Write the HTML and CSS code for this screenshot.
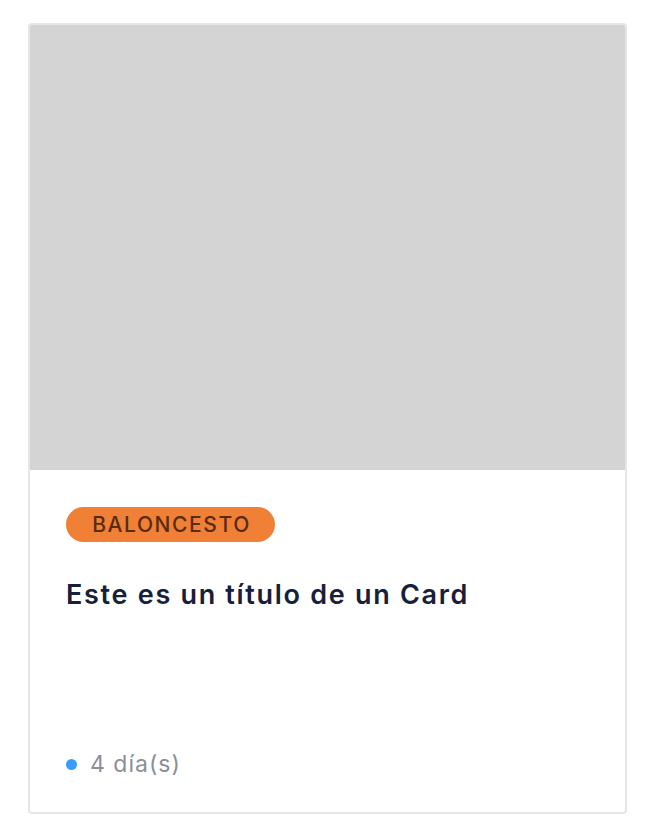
FILE: index.html
```html
<!DOCTYPE html>
<html>
<head>
<meta charset="utf-8">
<link rel="stylesheet" href="styles.css">
</head>
<body>
<div class="page">
  <article class="card">
    <div class="card-image"></div>
    <div class="card-body">
      <span class="badge">BALONCESTO</span>
      <h2 class="title">Este es un título de un Card</h2>
      <div class="meta"><span class="dot"></span><span class="meta-text">4 día(s)</span></div>
    </div>
  </article>
</div>
</body>
</html>
```

FILE: styles.css
```css
html, body { margin: 0; padding: 0; background: #fff; }
body { font-family: "Inter", "Noto Sans", sans-serif; }
.page { padding: 23px 21px 0 28px; }
.card {
  width: 595px;
  border: 2px solid #e6e6e6;
  border-radius: 4px;
  background: #fff;
  overflow: hidden;
}
.card-image { height: 445px; background: #d4d4d4; }
.card-body {
  padding: 37px 36px 34px 36px;
  display: flex;
  flex-direction: column;
  align-items: flex-start;
}
.badge {
  display: inline-flex;
  align-items: center;
  justify-content: center;
  height: 35px;
  width: 209px;
  box-sizing: border-box;
  border-radius: 18px;
  background: #f08035;
  color: #5a2a0c;
  font-size: 21px;
  font-weight: 500;
  letter-spacing: 1.6px;
  padding-left: 2px;
}
.title {
  margin: 36px 0 0 0;
  font-size: 27px;
  line-height: 34px;
  font-weight: 600;
  letter-spacing: 1.7px;
  color: #17203a;
  height: 172px;
}
.meta { display: flex; align-items: center; gap: 13px; }
.dot { width: 11px; height: 11px; border-radius: 50%; background: #3d9bfc; }
.meta-text { font-size: 23px; color: #8a8f9a; line-height: 28px; letter-spacing: 1px; }
```
